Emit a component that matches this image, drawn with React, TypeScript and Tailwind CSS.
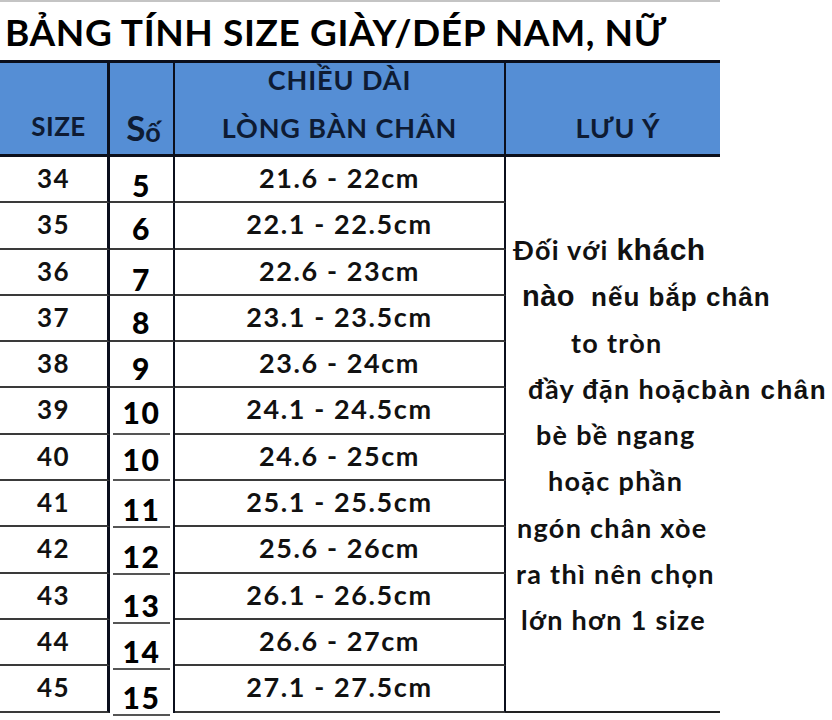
import React from "react";

const rows = [
  { size: "34", so: "5", len: "21.6 - 22cm", pad: 11 },
  { size: "35", so: "6", len: "22.1 - 22.5cm", pad: 8 },
  { size: "36", so: "7", len: "22.6 - 23cm", pad: 12 },
  { size: "37", so: "8", len: "23.1 - 23.5cm", pad: 9 },
  { size: "38", so: "9", len: "23.6 - 24cm", pad: 9 },
  { size: "39", so: "10", len: "24.1 - 24.5cm", pad: 7 },
  { size: "40", so: "10", len: "24.6 - 25cm", pad: 7 },
  { size: "41", so: "11", len: "25.1 - 25.5cm", pad: 11 },
  { size: "42", so: "12", len: "25.6 - 26cm", pad: 12 },
  { size: "43", so: "13", len: "26.1 - 26.5cm", pad: 14 },
  { size: "44", so: "14", len: "26.6 - 27cm", pad: 14 },
  { size: "45", so: "15", len: "27.1 - 27.5cm", pad: 14 },
];

export default function App() {
  return (
    <div className="relative h-[720px] w-[832px] overflow-hidden bg-white font-['Lato',sans-serif] font-bold text-[#111]">
      <div className="h-[2px] w-[720px] bg-[#c4c4c4]" />
      <div className="flex h-[58px] items-center pl-[5px] text-[37px] leading-none tracking-[0.6px] text-black">
        BẢNG TÍNH SIZE GIÀY/DÉP NAM, NỮ
      </div>

      <div className="grid w-[720px] grid-cols-[110px_65px_331px_214px] border-t-[3px] border-[#0b0f1c]">
        {/* header */}
        <div className="flex h-[94px] items-end justify-center border-r-[3px] border-b-[3px] border-[#0b0f1c] bg-[#558ed5] pb-[8px] pl-[10px] text-[26px] tracking-[0.5px] text-[#0e1b33]">
          SIZE
        </div>
        <div className="flex h-[94px] items-end justify-center border-r-2 border-b-[3px] border-[#0b0f1c] bg-[#558ed5] pb-[9px] pl-[4px] text-[#0e1b33]">
          <span className="text-[35px] leading-none">S</span>
          <span className="text-[27px] leading-none">ố</span>
        </div>
        <div className="flex h-[94px] flex-col items-center justify-start gap-[14px] border-r-2 border-b-[3px] border-[#0b0f1c] bg-[#558ed5] text-[27px] leading-[34px] tracking-[0.9px] text-[#0e1b33]">
          <span>CHIỀU DÀI</span>
          <span>LÒNG BÀN CHÂN</span>
        </div>
        <div className="flex h-[94px] items-end justify-center border-b-[3px] border-[#0b0f1c] bg-[#558ed5] pb-[6px] pl-[10px] text-[27px] tracking-[1px] text-[#0e1b33]">
          LƯU Ý
        </div>

        {/* note column */}
        <div className="col-start-4 row-span-12 row-start-2 whitespace-nowrap border-b-2 border-[#222] pt-[70px] text-[27px] leading-[46.3px] tracking-[1.3px] text-[#111]">
          <div className="h-[46.3px] pl-[7px]">
            Đối với{" "}
            <span className="font-['Liberation_Sans',sans-serif] text-[30px] tracking-[0.5px]">khách</span>
          </div>
          <div className="h-[46.3px] pl-[16px]">
            <span className="font-['Liberation_Sans',sans-serif] text-[29px] tracking-[0.5px]">nào</span>
            <span className="pl-[16px] font-['Liberation_Sans',sans-serif] text-[26px] tracking-[1px]">nếu bắp chân</span>
          </div>
          <div className="h-[46.3px] pl-[65px]">to tròn</div>
          <div className="h-[46.3px] pl-[22px]">
            đầy đặn hoặc
            <span className="font-['Liberation_Sans',sans-serif] text-[26px] tracking-[1.5px]">bàn chân</span>
          </div>
          <div className="h-[46.3px] pl-[30px]">bè bề ngang</div>
          <div className="h-[46.3px] pl-[42px]">hoặc phần</div>
          <div className="h-[46.3px] pl-[11px]">ngón chân xòe</div>
          <div className="h-[46.3px] pl-[10px]">ra thì nên chọn</div>
          <div className="h-[46.3px] pl-[15px]">lớn hơn 1 size</div>
        </div>

        {rows.map((r, i) => (
          <React.Fragment key={r.size}>
            <div className="flex h-[46.3px] items-start justify-center border-r-[3px] border-b-2 border-r-[#0b0f1c] border-b-[#3a3a3a] pt-[4px] text-[26px] leading-[34px] tracking-[1.5px]">
              {r.size}
            </div>
            <div
              className={
                "flex h-[46.3px] flex-col border-r-2 border-r-[#0b0f1c] " +
                (i < 5 ? "border-b-2 border-b-[#3a3a3a]" : "")
              }
            >
              <div
                className="flex flex-1 justify-center overflow-visible text-[30px] leading-[34px] font-black tracking-[1.5px] text-black"
                style={{ paddingTop: r.pad }}
              >
                {r.so}
              </div>
              {i >= 5 ? <div className="mx-[3px] h-[2px] shrink-0 bg-[#555]" /> : null}
            </div>
            <div className="flex h-[46.3px] items-start justify-center border-r-2 border-b-2 border-r-[#0b0f1c] border-b-[#3a3a3a] pt-[4px] text-[27px] leading-[34px] tracking-[1.6px]">
              {r.len}
            </div>
          </React.Fragment>
        ))}
      </div>
    </div>
  );
}
